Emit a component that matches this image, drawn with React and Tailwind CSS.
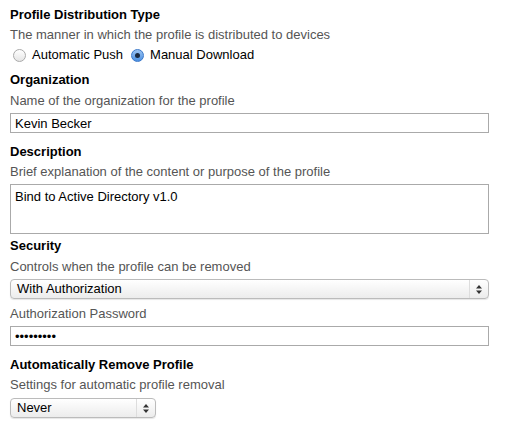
export default function App() {
  const title = "h-5 leading-5 text-[13px] font-bold text-black";
  const desc = "h-5 leading-5 text-[13px] text-[#555]";
  const input = "h-5 w-[479px] border border-[#aaa] bg-white px-1 text-[13px] leading-[18px] text-black";
  const selectCls = "h-5 flex items-center justify-between rounded-[4px] border border-[#bbb] bg-gradient-to-b from-white to-[#ececec] pl-1.5 text-[13px] text-black shadow-[0_1px_1px_rgba(0,0,0,0.1)]";
  const Arrows = () => (
    <div className="flex h-full items-center border-l border-[#ddd] my-1 px-1.5">
      <svg width="6" height="9" viewBox="0 0 6 9"><path d="M0 3.5L3 0L6 3.5Z M0 5.5L3 9L6 5.5Z" fill="#333" /></svg>
    </div>
  );
  return (
    <div className="w-[506px] h-[446px] bg-white px-[10px] pt-[5px]" style={{ fontFamily: '"Liberation Sans", Arial, sans-serif' }}>
      <div className={title}>Profile Distribution Type</div>
      <div className={desc}>The manner in which the profile is distributed to devices</div>
      <div className="h-5 flex items-center gap-[6px] pl-[3px] text-[13px] text-black">
        <span className="w-[13px] h-[13px] rounded-full border border-[#aaa] bg-gradient-to-b from-white to-[#e5e5e5]" />
        <span className="mr-[2px]">Automatic Push</span>
        <span className="w-[13px] h-[13px] rounded-full border border-[#3b78c9] bg-gradient-to-b from-[#9cc4f2] to-[#4a90e2] flex items-center justify-center">
          <span className="w-[5px] h-[5px] rounded-full bg-[#1a2a40]" />
        </span>
        <span>Manual Download</span>
      </div>
      <div className={`${title} mt-[5px]`}>Organization</div>
      <div className={`${desc} mt-px`}>Name of the organization for the profile</div>
      <input className={`${input} mt-[2px] block`} defaultValue="Kevin Becker" />
      <div className={`${title} mt-[9px]`}>Description</div>
      <div className={desc}>Brief explanation of the content or purpose of the profile</div>
      <textarea className="mt-[2px] block h-[50px] w-[479px] resize-none border border-[#aaa] px-1 pt-1 text-[13px] leading-4 text-black" defaultValue="Bind to Active Directory v1.0" />
      <div className={`${title} mt-[2px]`}>Security</div>
      <div className={`${desc} mt-px`}>Controls when the profile can be removed</div>
      <div className={`${selectCls} mt-[2px] w-[479px]`}><span>With Authorization</span><Arrows /></div>
      <div className={`${desc} mt-[5px]`}>Authorization Password</div>
      <input type="password" className={`${input} mt-[2px] block`} defaultValue="xxxxxxxxx" />
      <div className={`${title} mt-[9px]`}>Automatically Remove Profile</div>
      <div className={desc}>Settings for automatic profile removal</div>
      <div className={`${selectCls} mt-[3px] w-[146px]`}><span>Never</span><Arrows /></div>
    </div>
  );
}
